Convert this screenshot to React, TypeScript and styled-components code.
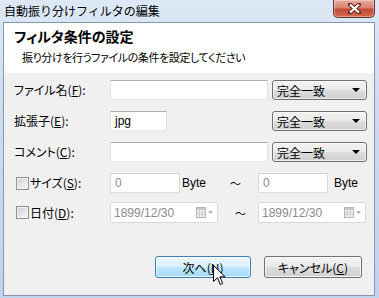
import styled, { createGlobalStyle } from 'styled-components';

const GlobalStyle = createGlobalStyle`
    html, body {
        margin: 0;
        padding: 0;
    }
    body {
        font-family: 'Noto Sans CJK JP', 'Liberation Sans', sans-serif;
        font-size: 12px;
        color: #000;
        font-feature-settings: 'palt';
    }
`;

const Window = styled.div`
    position: relative;
    width: 379px;
    height: 298px;
    box-sizing: border-box;
    padding: 0 4px 2px 3px;
    display: flex;
    flex-direction: column;
    overflow: hidden;
    background: linear-gradient(180deg, #dce8f5 0%, #cbdcf0 40%, #bfd4ec 100%);
`;

const TitleBar = styled.div`
    height: 22px;
    display: flex;
    align-items: flex-start;
    justify-content: space-between;
    flex-shrink: 0;
`;

const Title = styled.span`
    padding-left: 1px;
    line-height: 21px;
    font-size: 12px;
    font-feature-settings: normal;
`;

const CloseButton = styled.div`
    width: 42px;
    height: 18px;
    box-sizing: border-box;
    border: 1px solid #6e3230;
    border-top: none;
    border-radius: 0 0 5px 5px;
    display: flex;
    align-items: center;
    justify-content: center;
    background: linear-gradient(180deg, #e9a99b 0%, #d98270 45%, #c14a36 55%, #cf6a4e 100%);
    box-shadow: inset 0 0 0 1px rgba(255, 255, 255, 0.35);
`;

const Client = styled.div`
    flex: 1;
    display: flex;
    flex-direction: column;
    border: 1px solid #8596ad;
    background: #f0f0f0;
`;

const Header = styled.div`
    height: 50px;
    box-sizing: border-box;
    padding: 4px 0 0 10px;
    background: #fff;
    flex-shrink: 0;
`;

const HeaderTitle = styled.div`
    font-size: 14px;
    font-weight: bold;
    line-height: 18px;
`;

const HeaderText = styled.div`
    margin: 4px 0 0 8px;
    line-height: 16px;
    font-size: 11px;
    letter-spacing: -0.4px;
`;

const Form = styled.div`
    display: flex;
    flex-direction: column;
    padding: 7px 7px 0 10px;
`;

const Row = styled.div<{ $top: number; $h?: number }>`
    display: flex;
    align-items: center;
    margin-top: ${(p) => p.$top}px;
    height: ${(p) => p.$h ?? 20}px;
`;

const Label = styled.label`
    width: 96px;
    flex-shrink: 0;
    display: flex;
    align-items: center;
    line-height: 16px;
`;

const CheckBox = styled.span`
    width: 13px;
    height: 13px;
    box-sizing: border-box;
    margin: 0 1px 0 2px;
    border: 1px solid #8e8f8f;
    background: linear-gradient(135deg, #c9ccd2 0%, #e8e9eb 60%, #f7f7f7 100%);
    box-shadow: inset 0 0 0 1px #f4f4f4;
`;

const TextBox = styled.div<{ $w: number; $disabled?: boolean }>`
    width: ${(p) => p.$w}px;
    height: 20px;
    box-sizing: border-box;
    flex-shrink: 0;
    padding: 0 4px;
    line-height: 18px;
    background: #fff;
    border: 1px solid;
    border-color: ${(p) =>
        p.$disabled ? '#cfcfcf #d9d9d9 #dedede #d9d9d9' : '#abadb3 #dbdfe6 #e3e9ef #e2e3ea'};
    color: ${(p) => (p.$disabled ? '#8b8b8b' : '#000')};
    font-family: 'Liberation Sans', 'Noto Sans CJK JP', sans-serif;
    font-size: 12px;
`;

const Combo = styled.div`
    width: 95px;
    height: 20px;
    box-sizing: border-box;
    margin-left: auto;
    padding: 0 6px 0 4px;
    display: flex;
    align-items: center;
    justify-content: space-between;
    border: 1px solid #707070;
    border-radius: 3px;
    background: linear-gradient(180deg, #f2f2f2 0%, #ebebeb 50%, #dddddd 50%, #cfcfcf 100%);
    box-shadow: inset 0 0 0 1px rgba(255, 255, 255, 0.6);
    font-feature-settings: normal;
`;

const Arrow = styled.span`
    width: 0;
    height: 0;
    border-left: 4px solid transparent;
    border-right: 4px solid transparent;
    border-top: 4px solid #000;
`;

const Unit = styled.span<{ $w?: number; $pad: number }>`
    width: ${(p) => (p.$w ? `${p.$w}px` : 'auto')};
    flex-shrink: 0;
    padding-left: ${(p) => p.$pad}px;
    box-sizing: border-box;
    font-family: 'Liberation Sans', sans-serif;
    font-size: 12px;
`;

const Tilde = styled.span<{ $w: number; $pad: number }>`
    width: ${(p) => p.$w}px;
    flex-shrink: 0;
    box-sizing: border-box;
    padding-left: ${(p) => p.$pad}px;
    font-size: 11px;
    font-feature-settings: normal;
`;

const DateBox = styled.div`
    width: 108px;
    height: 21px;
    box-sizing: border-box;
    flex-shrink: 0;
    padding: 0 4px 0 3px;
    display: flex;
    align-items: center;
    justify-content: space-between;
    background: #fff;
    border: 1px solid #d9d9d9;
    color: #8b8b8b;
    font-family: 'Liberation Sans', sans-serif;
    font-size: 12px;
`;

const Footer = styled.div`
    margin-top: auto;
    padding: 0 12px 17px 0;
    display: flex;
    justify-content: flex-end;
    gap: 13px;
`;

const Button = styled.div<{ $active?: boolean; $w: number }>`
    width: ${(p) => p.$w}px;
    height: 22px;
    box-sizing: border-box;
    display: flex;
    align-items: center;
    justify-content: center;
    border-radius: 3px;
    border: 1px solid ${(p) => (p.$active ? '#3c7fb1' : '#707070')};
    background: ${(p) =>
        p.$active
            ? 'linear-gradient(180deg, #eaf6fd 0%, #d9f0fc 50%, #bee6fd 50%, #a7d9f5 100%)'
            : 'linear-gradient(180deg, #f2f2f2 0%, #ebebeb 50%, #dddddd 50%, #cfcfcf 100%)'};
    box-shadow: inset 0 0 0 1px rgba(255, 255, 255, 0.7);
`;

const Cursor = styled.svg`
    position: absolute;
    left: 213px;
    top: 265px;
`;

const Key = ({ k }: { k: string }) => (
    <>
        (<u>{k}</u>):
    </>
);

const CalendarIcon = () => (
    <svg width="17" height="11" viewBox="0 0 17 11">
        <rect x="0.5" y="0.5" width="9" height="10" fill="#f4f4f4" stroke="#b5b5b5" />
        <rect x="1" y="1" width="8" height="2" fill="#c8c8c8" />
        <path d="M1 5.5H9M1 7.5H9M3.5 3V10M6.5 3V10" stroke="#d0d0d0" />
        <path d="M12 4H17L14.5 7Z" fill="#b0b0b0" />
    </svg>
);

const App = () => {
    return (
        <>
            <GlobalStyle />
            <Window>
                <TitleBar>
                    <Title>自動振り分けフィルタの編集</Title>
                    <CloseButton>
                        <svg width="13" height="11" viewBox="0 0 13 11">
                            <path
                                d="M2 1.5L11 9.5M11 1.5L2 9.5"
                                stroke="#5a2420"
                                strokeWidth="4"
                                strokeLinecap="round"
                            />
                            <path d="M2 1.5L11 9.5M11 1.5L2 9.5" stroke="#fff" strokeWidth="2.2" />
                        </svg>
                    </CloseButton>
                </TitleBar>
                <Client>
                    <Header>
                        <HeaderTitle>フィルタ条件の設定</HeaderTitle>
                        <HeaderText>振り分けを行うファイルの条件を設定してください</HeaderText>
                    </Header>
                    <Form>
                        <Row $top={0}>
                            <Label>
                                ファイル名<Key k="F" />
                            </Label>
                            <TextBox $w={158} />
                            <Combo>
                                完全一致
                                <Arrow />
                            </Combo>
                        </Row>
                        <Row $top={11}>
                            <Label>
                                拡張子<Key k="E" />
                            </Label>
                            <TextBox $w={57}>jpg</TextBox>
                            <Combo>
                                完全一致
                                <Arrow />
                            </Combo>
                        </Row>
                        <Row $top={11}>
                            <Label>
                                コメント<Key k="C" />
                            </Label>
                            <TextBox $w={158} />
                            <Combo>
                                完全一致
                                <Arrow />
                            </Combo>
                        </Row>
                        <Row $top={11}>
                            <Label>
                                <CheckBox />
                                サイズ<Key k="S" />
                            </Label>
                            <TextBox $w={70} $disabled>
                                0
                            </TextBox>
                            <Unit $w={40} $pad={2}>
                                Byte
                            </Unit>
                            <Tilde $w={38} $pad={10}>
                                〜
                            </Tilde>
                            <TextBox $w={70} $disabled>
                                0
                            </TextBox>
                            <Unit $pad={6}>Byte</Unit>
                        </Row>
                        <Row $top={9} $h={21}>
                            <Label>
                                <CheckBox />
                                日付<Key k="D" />
                            </Label>
                            <DateBox>
                                1899/12/30
                                <CalendarIcon />
                            </DateBox>
                            <Tilde $w={40} $pad={17}>
                                〜
                            </Tilde>
                            <DateBox>
                                1899/12/30
                                <CalendarIcon />
                            </DateBox>
                        </Row>
                    </Form>
                    <Footer>
                        <Button $active $w={96}>
                            次へ(<u>N</u>)
                        </Button>
                        <Button $w={98}>
                            キャンセル(<u>C</u>)
                        </Button>
                    </Footer>
                </Client>
                <Cursor width="13" height="21" viewBox="0 0 13 21">
                    <path
                        d="M0.5 0.5V16.5L4.5 12.7L7.3 19.5L9.6 18.5L6.9 11.8H12.1Z"
                        fill="#fff"
                        stroke="#000"
                        strokeLinejoin="round"
                    />
                </Cursor>
            </Window>
        </>
    );
};

export default App;
